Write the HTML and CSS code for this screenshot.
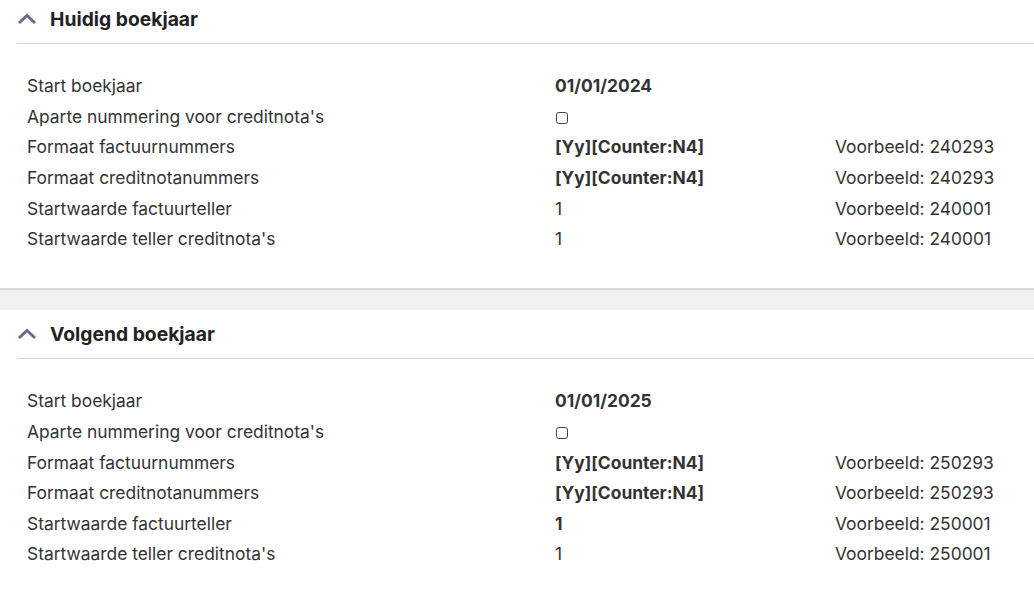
FILE: index.html
```html
<!DOCTYPE html>
<html lang="nl">

<head>
    <meta charset="UTF-8">
    <meta name="viewport" content="width=device-width, initial-scale=1.0">
    <title>Boekjaar</title>
    <link rel="stylesheet" href="styles.css">
</head>

<body>

    <section class="panel first">
        <div class="panel-head">
            <svg class="chevron" viewBox="0 0 20 12"><path d="M2 10 L10 2.5 L18 10" /></svg>
            <h2>Huidig boekjaar</h2>
        </div>
        <div class="rows">
            <div class="row"><span>Start boekjaar</span><b>01/01/2024</b><span></span></div>
            <div class="row"><span>Aparte nummering voor creditnota's</span><span><i class="check"></i></span><span></span></div>
            <div class="row"><span>Formaat factuurnummers</span><b>[Yy][Counter:N4]</b><span>Voorbeeld: 240293</span></div>
            <div class="row"><span>Formaat creditnotanummers</span><b>[Yy][Counter:N4]</b><span>Voorbeeld: 240293</span></div>
            <div class="row"><span>Startwaarde factuurteller</span><span>1</span><span>Voorbeeld: 240001</span></div>
            <div class="row"><span>Startwaarde teller creditnota's</span><span>1</span><span>Voorbeeld: 240001</span></div>
        </div>
    </section>

    <div class="divider"></div>

    <section class="panel">
        <div class="panel-head">
            <svg class="chevron" viewBox="0 0 20 12"><path d="M2 10 L10 2.5 L18 10" /></svg>
            <h2>Volgend boekjaar</h2>
        </div>
        <div class="rows">
            <div class="row"><span>Start boekjaar</span><b>01/01/2025</b><span></span></div>
            <div class="row"><span>Aparte nummering voor creditnota's</span><span><i class="check"></i></span><span></span></div>
            <div class="row"><span>Formaat factuurnummers</span><b>[Yy][Counter:N4]</b><span>Voorbeeld: 250293</span></div>
            <div class="row"><span>Formaat creditnotanummers</span><b>[Yy][Counter:N4]</b><span>Voorbeeld: 250293</span></div>
            <div class="row"><span>Startwaarde factuurteller</span><b>1</b><span>Voorbeeld: 250001</span></div>
            <div class="row"><span>Startwaarde teller creditnota's</span><span>1</span><span>Voorbeeld: 250001</span></div>
        </div>
    </section>

</body>

</html>
```

FILE: styles.css
```css
body {
    margin: 0;
    font-family: Inter, "Noto Sans", sans-serif;
    color: #333;
    background-color: #fff;
}

.panel {
    background-color: #fff;
    padding-bottom: 34px;
}

/* pagina is een stukje gescrold */
.panel.first {
    margin-top: -5px;
}

/* Kop met pijltje */
.panel-head {
    display: flex;
    align-items: center;
    height: 48px;
    margin-left: 17px;
    border-bottom: 1px solid #d6d6d6;
}

.chevron {
    width: 20px;
    height: 12px;
    margin-right: 13px;
}

.chevron path {
    fill: none;
    stroke: #6e6a85;
    stroke-width: 3;
}

h2 {
    margin: 0;
    font-size: 19.3px;
    font-weight: 700;
    color: #222;
}

.rows {
    padding: 26.5px 0 0 27px;
}

.row {
    display: grid;
    grid-template-columns: 528px 280px 1fr;
    height: 30.6px;
    align-items: center;
    font-size: 17.4px;
}

.row b {
    font-weight: 700;
}

.check {
    display: inline-block;
    width: 10px;
    height: 10px;
    border: 1.5px solid #444;
    border-radius: 3px;
    vertical-align: middle;
    margin-left: 1px;
}

.divider {
    height: 20px;
    background-color: #f0f0f0;
    border-top: 2px solid #d8d8d8;
}
```
